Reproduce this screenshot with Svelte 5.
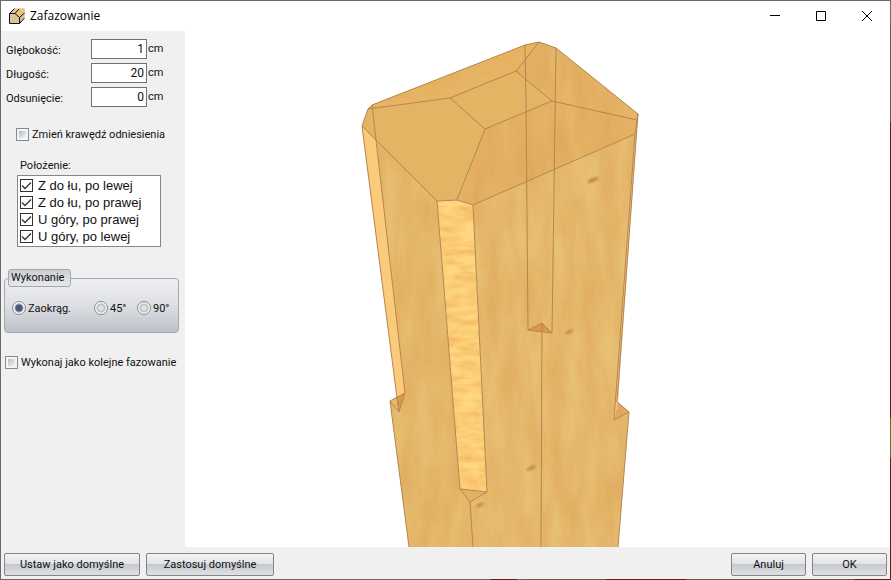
<script>
  /**
   * ChamferDialog: chamfer settings on the left, preview of the timber on the right.
   */
  let dimensions = $state([
    { id: 'depth', label: 'Głębokość:', value: '1' },
    { id: 'length', label: 'Długość:', value: '20' },
    { id: 'offset', label: 'Odsunięcie:', value: '0' },
  ]);

  let positions = $state([
    { label: 'Z do łu, po lewej', checked: true },
    { label: 'Z do łu, po prawej', checked: true },
    { label: 'U góry, po prawej', checked: true },
    { label: 'U góry, po lewej', checked: true },
  ]);

  const finishes = [
    { id: 'round', label: 'Zaokrąg.' },
    { id: '45', label: '45°' },
    { id: '90', label: '90°' },
  ];

  let finish = $state('round');
  let changeEdge = $state(false);
  let asNext = $state(false);
</script>

<div class="window">
  <header class="titlebar">
    <svg class="app-icon" width="16" height="16" viewBox="0 0 16 16">
      <path d="M0.5 5.5L5.5 0.5H15.5V9.5L10.5 15.5H0.5Z" fill="#dcc39a" />
      <path d="M5.5 5.5L10 0.5H15.5V4L10.5 9.5L8 7.5Z" fill="#ecc478" />
      <path d="M10.5 9.5L15.5 4V10L10.5 15.5Z" fill="#d8c09a" />
      <path d="M0.5 5.5H6L10.5 9.5V15.5H0.5ZM0.5 5.5L5.5 0.5M6 5.5L10 1M10.5 9.5L15.5 5M10.5 15.5L15.5 10" fill="none" stroke="#111" />
    </svg>
    <h1>Zafazowanie</h1>
    <div class="caption-buttons">
      <button aria-label="Minimalizuj">
        <svg width="10" height="10" viewBox="0 0 10 10"><path d="M0 4.5H10" /></svg>
      </button>
      <button aria-label="Maksymalizuj">
        <svg width="10" height="10" viewBox="0 0 10 10"><path d="M0.5 0.5H9.5V9.5H0.5Z" /></svg>
      </button>
      <button aria-label="Zamknij">
        <svg width="10" height="10" viewBox="0 0 10 10"><path d="M0 0L10 10M10 0L0 10" /></svg>
      </button>
    </div>
  </header>

  <main>
    <aside class="settings">
      <div class="dimensions">
        {#each dimensions as d}
          <div class="dimension">
            <label for={d.id}>{d.label}</label>
            <input id={d.id} type="text" bind:value={d.value} />
            <span>cm</span>
          </div>
        {/each}
      </div>

      <label class="check edge">
        <input type="checkbox" bind:checked={changeEdge} />
        <span>Zmień krawędź odniesienia</span>
      </label>

      <div class="positions">
        <span id="positions-label">Położenie:</span>
        <div class="position-list" role="group" aria-labelledby="positions-label">
          {#each positions as p}
            <label>
              <input type="checkbox" bind:checked={p.checked} />
              {p.label}
            </label>
          {/each}
        </div>
      </div>

      <fieldset>
        <legend>Wykonanie</legend>
        <div class="finishes">
          {#each finishes as f}
            <label>
              <input type="radio" name="finish" value={f.id} bind:group={finish} />
              <span>{f.label}</span>
            </label>
          {/each}
        </div>
      </fieldset>

      <label class="check next">
        <input type="checkbox" bind:checked={asNext} />
        <span>Wykonaj jako kolejne fazowanie</span>
      </label>
    </aside>

    <section class="preview">
      <svg viewBox="185 31 705 516" role="img" aria-label="Podgląd">
        <defs>
          <filter id="grain" x="0" y="0" width="100%" height="100%" color-interpolation-filters="sRGB">
            <feTurbulence type="fractalNoise" baseFrequency="0.06 0.015" numOctaves="4" seed="7" />
            <feColorMatrix values="0 0 0 0 0.85  0 0 0 0 0.6  0 0 0 0 0.31  0.8 0 0 0 -0.2" />
            <feComposite in2="SourceGraphic" operator="in" result="grain" />
            <feMerge><feMergeNode in="SourceGraphic" /><feMergeNode in="grain" /></feMerge>
          </filter>
          <filter id="cross-grain" x="0" y="0" width="100%" height="100%" color-interpolation-filters="sRGB">
            <feTurbulence type="fractalNoise" baseFrequency="0.05 0.16" numOctaves="3" seed="3" />
            <feColorMatrix values="0 0 0 0 0.93  0 0 0 0 0.66  0 0 0 0 0.31  1.1 0 0 0 -0.35" />
            <feComposite in2="SourceGraphic" operator="in" result="grain" />
            <feMerge><feMergeNode in="SourceGraphic" /><feMergeNode in="grain" /></feMerge>
          </filter>
          <filter id="soft" x="-50%" y="-50%" width="200%" height="200%"><feGaussianBlur stdDeviation="1.2" /></filter>
        </defs>

        <!-- Side faces -->
        <g filter="url(#grain)">
          <path d="M362 126L437 201L460 489L470 502L473 547H409L390 401L398 396Z" fill="#e7be71" />
          <path d="M473 205L635 134L614 420L629 412L618 547H473L470 502L487 492Z" fill="#e8c074" />
          <path d="M618 402L629 412L614 420Z" fill="#e0b066" />
        </g>

        <!-- Top face and its bevels -->
        <path d="M362 126L368 109L372 105L525 45L539 42L556 48L638 114L635 134L473 205L457 200L437 201Z" fill="#e4b465" />
        <g filter="url(#cross-grain)">
          <path d="M372 105L525 45L539 42L516 71L450 98L370 109Z" fill="#e5b669" />
        </g>
        <g filter="url(#grain)">
          <path d="M485 129L552 101L637 120L635 134L473 205L457 200Z" fill="#e6b568" />
          <path d="M539 42L556 48L638 114L637 120L552 101L516 71Z" fill="#e6b769" />
        </g>

        <!-- Long chamfers -->
        <path d="M362 126L376 140L405 393L398 406Z" fill="#fbca7b" />
        <path d="M638 114L635 134L614 420L618 402Z" fill="#f3c078" />
        <g filter="url(#cross-grain)">
          <path d="M437 201L457 200L473 205L487 492L460 489Z" fill="#ffd681" />
        </g>

        <!-- Chamfer ends -->
        <path d="M390 401L397 397L399 412Z" fill="#e7b96d" />
        <path d="M397 397L405 393L399 412Z" fill="#dc984a" />
        <path d="M460 489L487 492L470 502Z" fill="#e2b264" />
        <path d="M528 330L542 323L552 333Z" fill="#dc984a" />

        <!-- Knots -->
        <g fill="#a8622c" opacity="0.6" filter="url(#soft)">
          <ellipse cx="593" cy="180" rx="6" ry="2" transform="rotate(-25 593 180)" />
          <ellipse cx="569" cy="332" rx="4" ry="1.5" transform="rotate(-25 569 332)" />
          <ellipse cx="531" cy="468" rx="5" ry="1.5" transform="rotate(-25 531 468)" />
          <ellipse cx="480" cy="505" rx="4" ry="1.5" transform="rotate(-25 480 505)" />
        </g>

        <g class="edges">
          <path d="M409 547L390 401L405 393L399 412L390 401M398 406L362 126L368 109L372 105L525 45L539 42L556 48L638 114L617 402L629 412L618 547" />
          <path d="M362 126L437 201L457 200L473 205L635 134L638 114" />
          <path d="M372 105L376 140L405 393M635 134L614 420L629 412M397 397L399 412" />
          <path d="M368 109L450 98L516 71L552 101L485 129L450 98M516 71L539 42M552 101L637 120M485 129L457 200" />
          <path d="M437 201L460 489L487 492L473 205M460 489L470 502L487 492M470 502L473 547" />
          <path d="M525 45L526 100L528 330L542 323L552 333L528 330M556 48L552 333M542 323L541 547" />
        </g>
      </svg>
    </section>
  </main>

  <footer>
    <button class="btn wide">Ustaw jako domyślne</button>
    <button class="btn medium">Zastosuj domyślne</button>
    <span class="spacer"></span>
    <button class="btn">Anuluj</button>
    <button class="btn">OK</button>
  </footer>
</div>

<style>
  :global(body) {
    margin: 0;
    background: #fff;
  }

  /* The thin frame changes colour along its right and bottom sides */
  .window {
    display: flex;
    flex-direction: column;
    box-sizing: border-box;
    min-height: 100vh;
    border: 1px solid transparent;
    background:
      linear-gradient(#f0f0f0, #f0f0f0) padding-box,
      linear-gradient(#6b6a6b 4%, #6b5d48 4% 21%, #6b1a1a 21% 72%, #5d7a20 72% 79%, #6b1a1a 79%) right / 1px 100% no-repeat border-box,
      linear-gradient(90deg, #6b6a6b 55%, #6b1a1a 55% 58%, #6b6a6b 58% 59%, #6b5d48 59% 68%, #6b1a1a 68% 77%, #5f5a42 77% 96%, #6b1a1a 96%) bottom / 100% 1px no-repeat border-box,
      linear-gradient(#6b6a6b, #6b6a6b) border-box;
    color: #111;
    font-family: Roboto, sans-serif;
    font-size: 11px;
    line-height: 16px;
  }

  input,
  button {
    box-sizing: border-box;
    flex-shrink: 0;
    margin: 0;
    color: inherit;
    font: inherit;
  }

  /* ─── Title bar ─── */
  .titlebar {
    display: flex;
    align-items: center;
    height: 30px;
    padding-left: 8px;
    background: #fff;
  }

  h1 {
    flex: 1;
    margin: 0 0 0 5px;
    color: #000;
    font-family: "Open Sans", sans-serif;
    font-size: 12px;
    font-weight: 400;
  }

  .caption-buttons {
    display: flex;
    height: 100%;
  }

  .caption-buttons button {
    display: flex;
    align-items: center;
    justify-content: center;
    width: 46px;
    padding: 0;
    border: 0;
    background: none;
  }

  .caption-buttons svg {
    fill: none;
    stroke: #000;
  }

  /* ─── Settings ─── */
  main {
    display: flex;
    flex: 1;
  }

  .settings {
    display: flex;
    flex-direction: column;
    box-sizing: border-box;
    width: 184px;
    padding: 8px 6px 0 3px;
    white-space: nowrap;
  }

  .dimensions {
    display: flex;
    flex-direction: column;
    gap: 4px;
    padding-left: 2px;
  }

  .dimension {
    display: grid;
    grid-template-columns: 84px 56px 20px;
    align-items: center;
    column-gap: 1px;
  }

  .dimension label {
    padding-top: 4px;
  }

  .dimension input {
    height: 20px;
    padding: 0 2px;
    border: 1px solid #707073;
    background: #fff;
    font-size: 12px;
    text-align: right;
  }

  .check {
    display: flex;
    align-items: center;
    gap: 3px;
  }

  .check span,
  .finishes span {
    padding-top: 2px;
  }

  .check input {
    appearance: none;
    width: 13px;
    height: 13px;
    padding: 2px;
    border: 1px solid #858a93;
    background: linear-gradient(135deg, #b4bbc4, #f4f5f6) content-box, #f4f4f4;
  }

  .edge {
    margin: 18px 0 0 12px;
  }

  .positions {
    margin: 15px 0 0 13px;
  }

  .positions > span {
    margin-left: 3px;
  }

  .position-list {
    box-sizing: border-box;
    width: 144px;
    margin-top: 1px;
    padding: 1px 2px;
    border: 1px solid #828790;
    background: #fff;
    font-family: "Liberation Sans", sans-serif;
    font-size: 13px;
    line-height: 17px;
  }

  .position-list label {
    display: flex;
    align-items: center;
    gap: 5px;
  }

  .position-list input {
    appearance: none;
    width: 13px;
    height: 13px;
    border: 1px solid #333;
    background: #fff;
  }

  .position-list input:checked {
    background: #fff url("data:image/svg+xml,%3Csvg xmlns='http://www.w3.org/2000/svg' viewBox='0 0 11 11'%3E%3Cpath d='M1 5.5L4 8.5L10 2.5' fill='none' stroke='%23333' stroke-width='1.3'/%3E%3C/svg%3E");
  }

  fieldset {
    position: relative;
    box-sizing: border-box;
    min-width: 0;
    margin: 31px 0 0;
    padding: 20px 6px 15px 7px;
    border: 1px solid #a3a8b0;
    border-radius: 4px;
    background: linear-gradient(#eeeff1, #dddfe3 50%, #bcc1c9);
  }

  legend {
    position: absolute;
    top: -10px;
    left: 3px;
    padding: 0 6px 0 2px;
    border: 1px solid #a3a8b0;
    border-radius: 3px;
    background: linear-gradient(#cbcfd5, #e6e8ea);
  }

  .finishes {
    display: grid;
    grid-template-columns: 82px 43px auto;
  }

  .finishes label {
    display: flex;
    align-items: center;
    gap: 2px;
  }

  .finishes input {
    appearance: none;
    width: 14px;
    height: 14px;
    border: 1px solid #858a93;
    border-radius: 50%;
    background: radial-gradient(#dfe2e6 2px, #b4b9c1 4px, #f4f4f4 5px);
  }

  .finishes input:checked {
    background: radial-gradient(#46597a 3px, #f4f4f4 5px);
  }

  .next {
    margin: 20px 0 0 1px;
  }

  /* ─── Preview ─── */
  .preview {
    flex: 1;
    min-width: 0;
    background: #fff;
  }

  .preview svg {
    display: block;
    width: 100%;
  }

  .edges {
    fill: none;
    stroke: #b58550;
    stroke-linejoin: round;
  }

  /* ─── Footer ─── */
  footer {
    display: flex;
    gap: 6px;
    padding: 6px 3px 3px;
  }

  .spacer {
    flex: 1;
  }

  .btn {
    width: 75px;
    height: 23px;
    padding: 0;
    border: 1px solid #858585;
    border-radius: 2px;
    background: linear-gradient(#f2f3f4, #e2e4e7 45%, #c6cad0 50%, #dfe1e4);
  }

  .wide {
    width: 136px;
  }

  .medium {
    width: 128px;
  }
</style>
